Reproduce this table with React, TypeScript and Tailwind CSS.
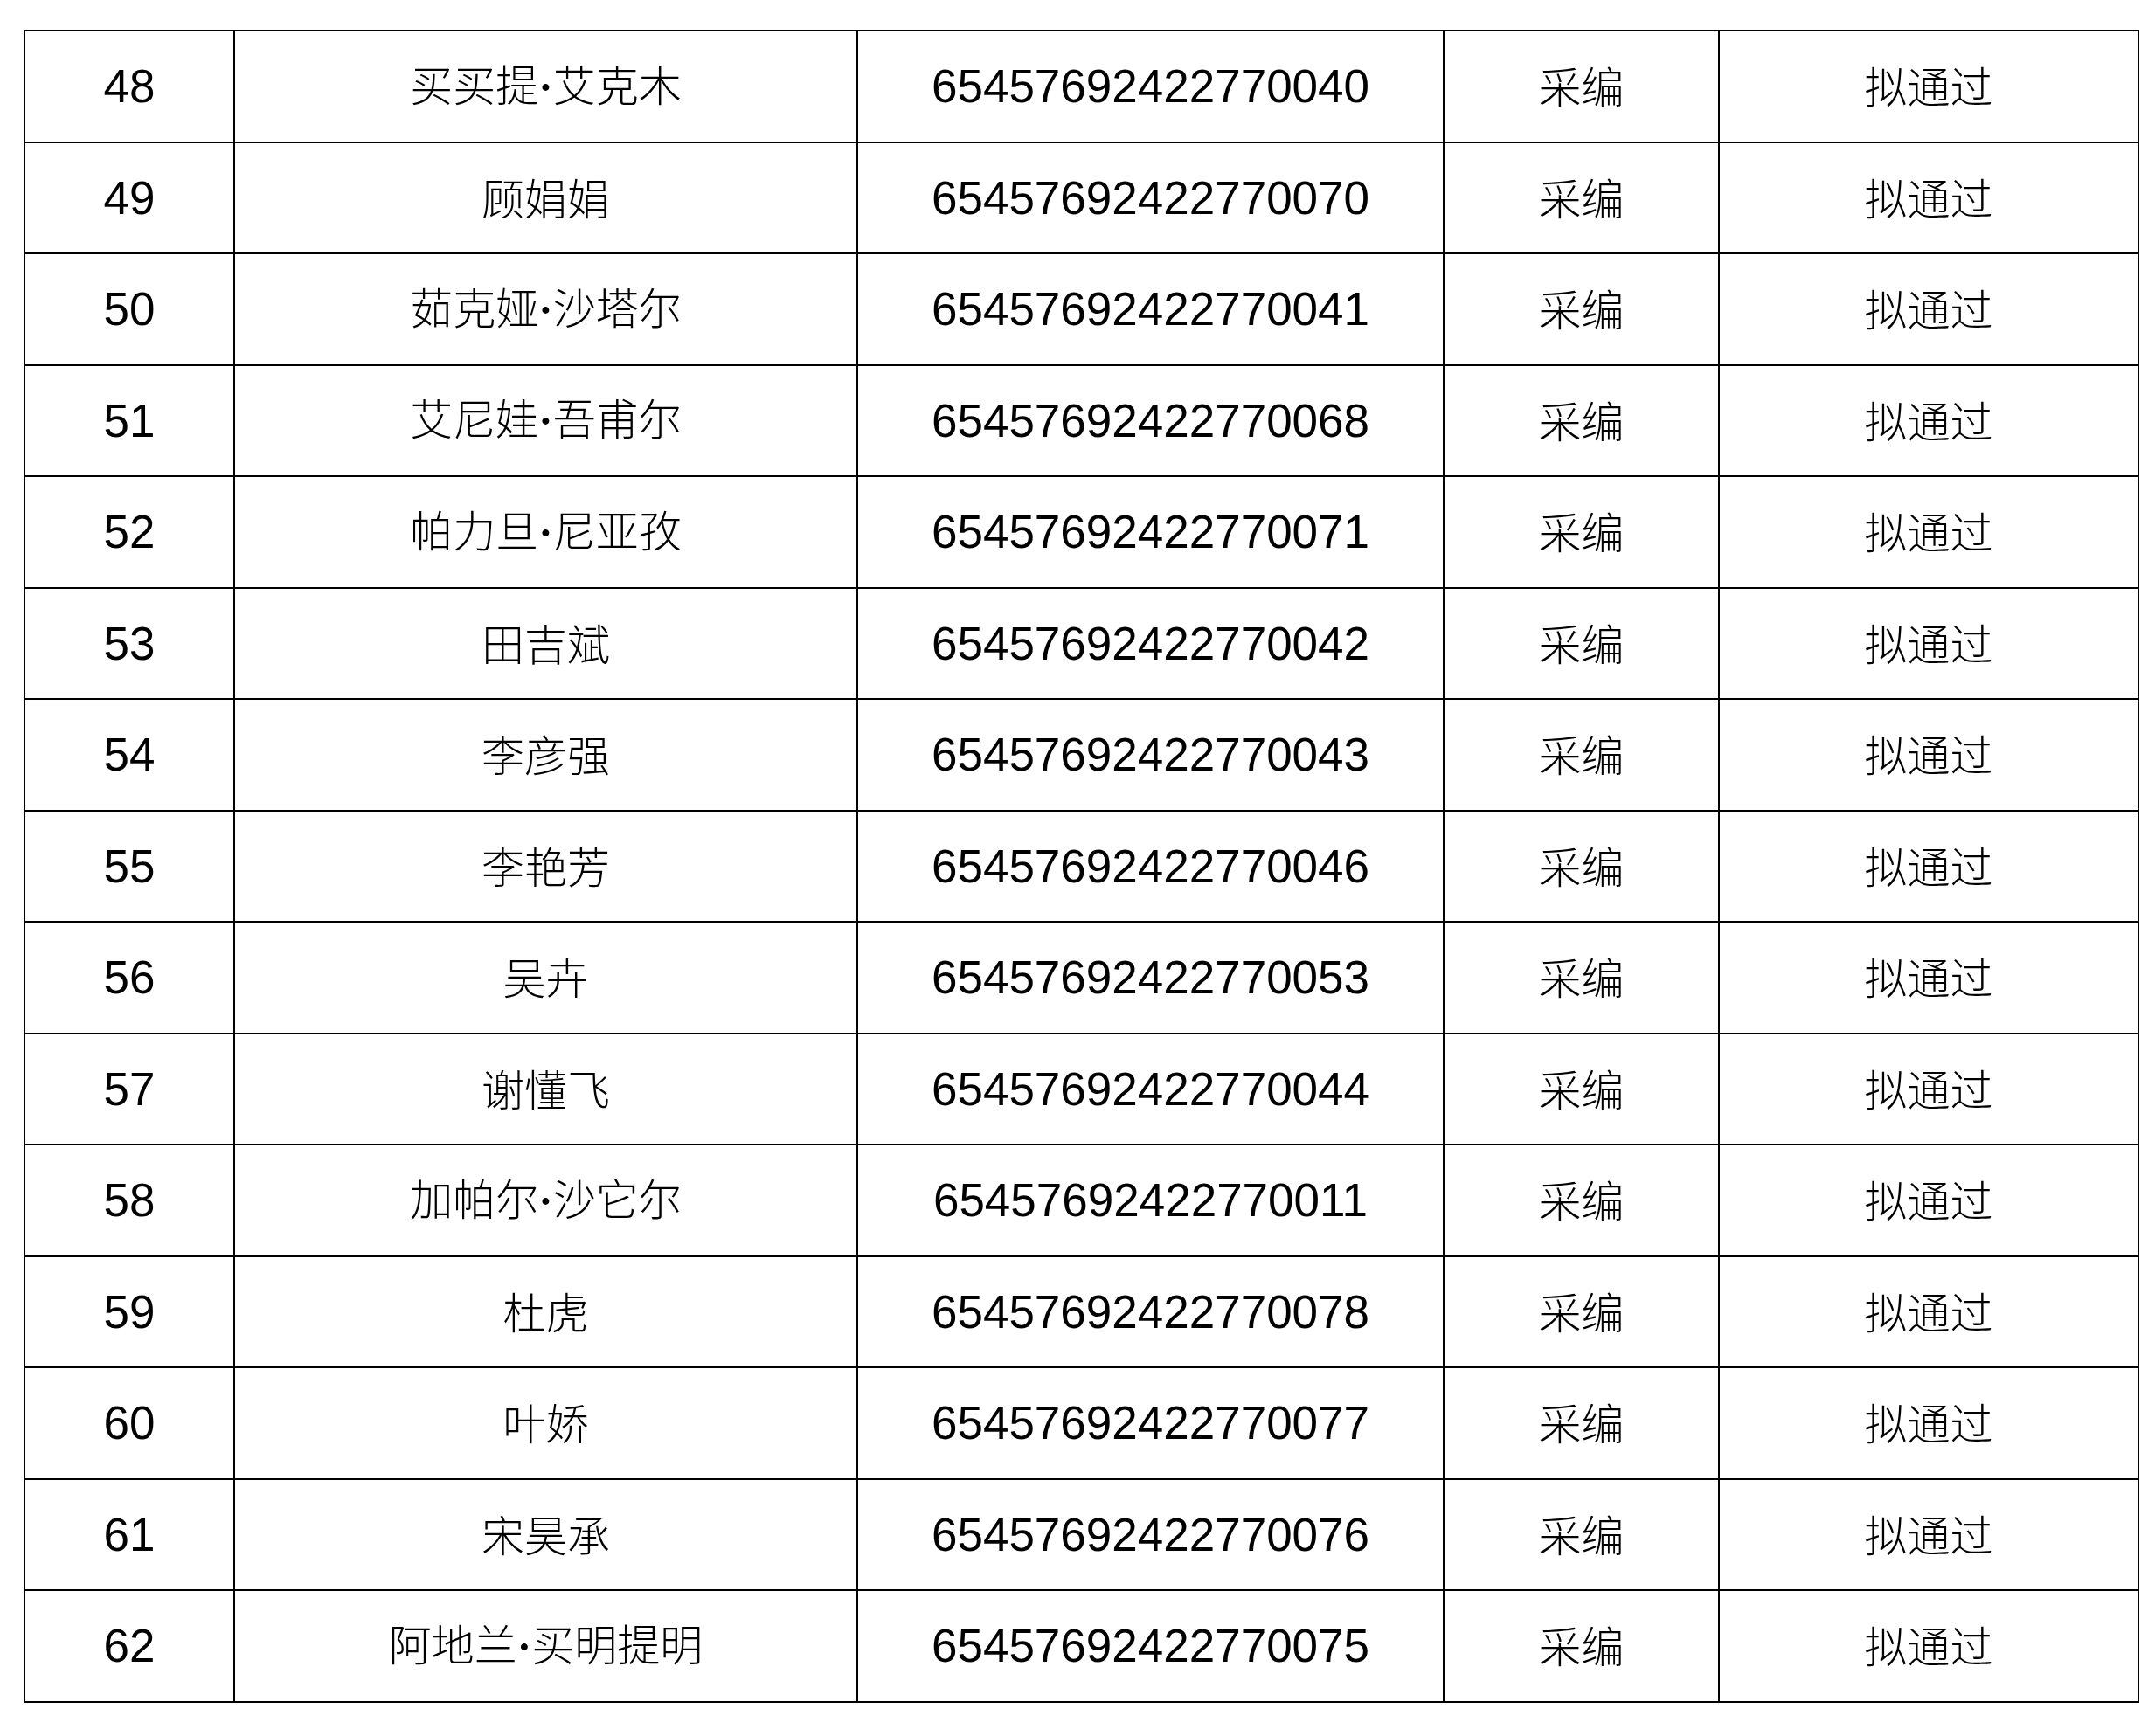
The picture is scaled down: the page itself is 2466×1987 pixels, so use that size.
import React from 'react';

const ROWS = [
  { no: 48, name: '买买提·艾克木', id: '65457692422770040' },
  { no: 49, name: '顾娟娟', id: '65457692422770070' },
  { no: 50, name: '茹克娅·沙塔尔', id: '65457692422770041' },
  { no: 51, name: '艾尼娃·吾甫尔', id: '65457692422770068' },
  { no: 52, name: '帕力旦·尼亚孜', id: '65457692422770071' },
  { no: 53, name: '田吉斌', id: '65457692422770042' },
  { no: 54, name: '李彦强', id: '65457692422770043' },
  { no: 55, name: '李艳芳', id: '65457692422770046' },
  { no: 56, name: '吴卉', id: '65457692422770053' },
  { no: 57, name: '谢懂飞', id: '65457692422770044' },
  { no: 58, name: '加帕尔·沙它尔', id: '65457692422770011' },
  { no: 59, name: '杜虎', id: '65457692422770078' },
  { no: 60, name: '叶娇', id: '65457692422770077' },
  { no: 61, name: '宋昊承', id: '65457692422770076' },
  { no: 62, name: '阿地兰·买明提明', id: '65457692422770075' },
];

const cell =
  'flex items-center justify-center h-[127.5px] border-r-2 border-b-2 border-black';
const num = "font-['Liberation_Sans',Arial,sans-serif] text-[53px] leading-none";
const han =
  "font-['Noto_Sans_CJK_SC','Noto_Sans_CJK_TC',sans-serif] font-light text-[49px] leading-none pb-[4px]";

// the dot between name parts is narrow in the original, so set it in a Latin face
function Name({ text }: { text: string }) {
  const parts = text.split('·');
  return (
    <span className={han}>
      {parts.map((p, i) => (
        <React.Fragment key={i}>
          {i > 0 && <span className="font-['Liberation_Serif',serif] font-bold">·</span>}
          {p}
        </React.Fragment>
      ))}
    </span>
  );
}

export default function App() {
  return (
    <div className="min-h-[1987px] w-[2466px] bg-white text-black pt-[34px] pl-[27px]">
      <div className="grid w-max grid-cols-[240px_713px_671px_315px_480px] border-l-2 border-t-2 border-black">
        {ROWS.map((r) => (
          <React.Fragment key={r.no}>
            <div className={cell}>
              <span className={num}>{r.no}</span>
            </div>
            <div className={cell}>
              <Name text={r.name} />
            </div>
            <div className={cell}>
              <span className={num}>{r.id}</span>
            </div>
            <div className={cell}>
              <span className={han}>采编</span>
            </div>
            <div className={cell}>
              <span className={han}>拟通过</span>
            </div>
          </React.Fragment>
        ))}
      </div>
    </div>
  );
}
